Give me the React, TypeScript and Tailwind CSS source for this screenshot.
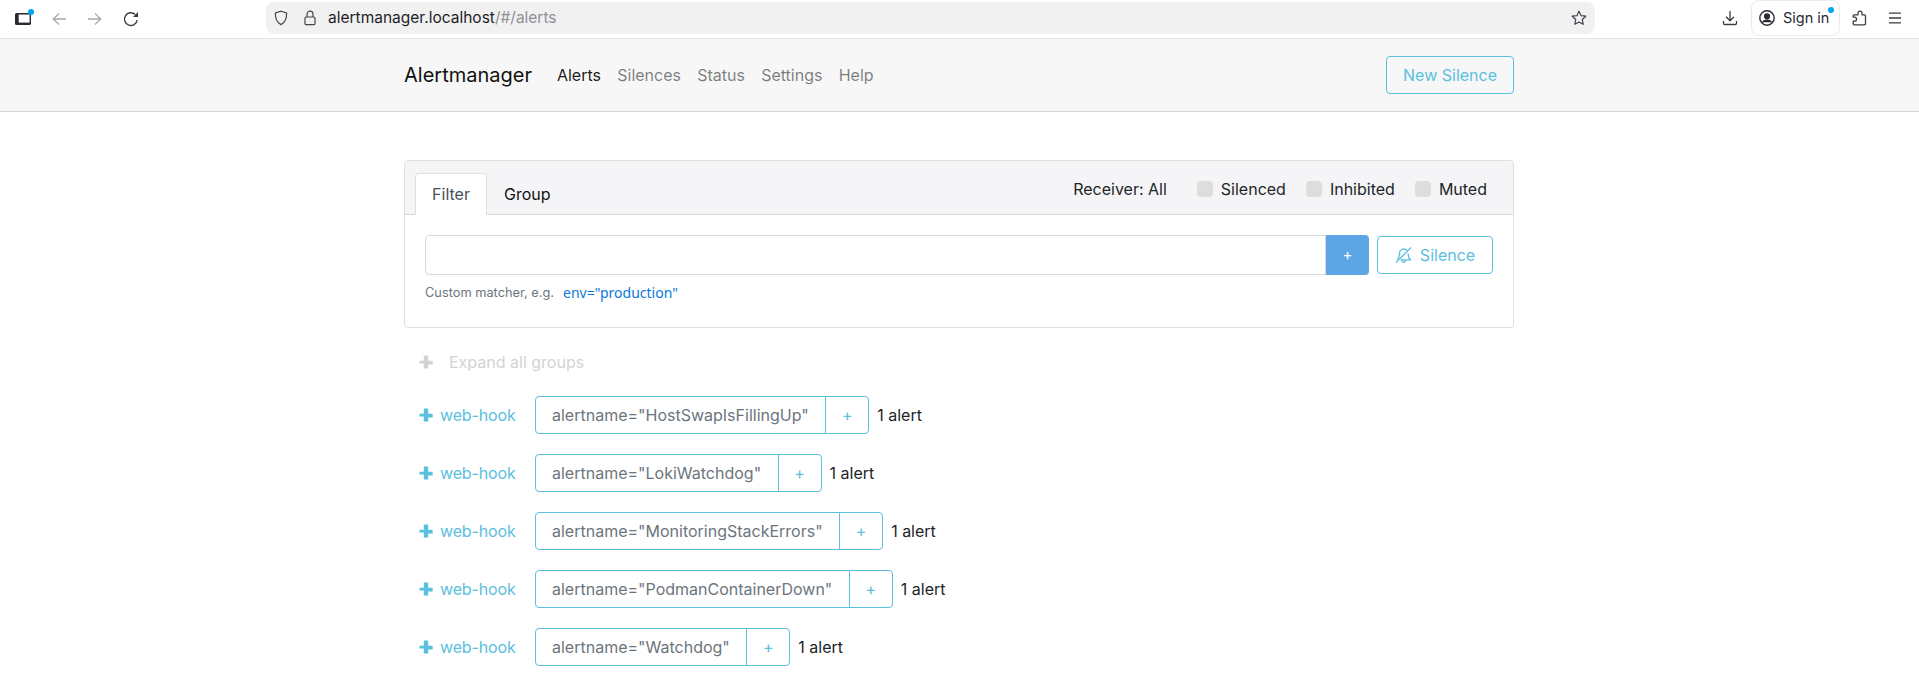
const inter = { fontFamily: "Inter, sans-serif" };

function ThickPlus({ className }: { className: string }) {
  return (
    <svg viewBox="0 0 14 14" className={className} fill="currentColor">
      <path d="M5.4 0.5h3.2c.3 0 .6.3.6.6v4.7h3.9c.3 0 .6.3.6.6v2.6c0 .3-.3.6-.6.6H9.200v3.300c0 .3-.3.6-.6.6H5.400c-.3 0-.6-.3-.6-.6V8.600H1c-.3 0-.6-.3-.6-.6V6.400c0-.3.3-.6.6-.6h3.800V1.100c0-.3.300-.6.600-.6Z" />
    </svg>
  );
}

function Group({ name }: { name: string }) {
  return (
    <div className="flex items-center h-[38px] mb-5">
      <a className="flex items-center text-[#5bc0de] text-base tracking-[-0.15px] w-[131px] shrink-0 pl-[15px]">
        <ThickPlus className="w-[14px] h-[14px] mr-[7px]" />
        web-hook
      </a>
      <div className="flex h-[38px] border border-[#5bc0de] rounded-[4px]">
        <span className="flex items-center pl-[16px] pr-[16.5px] text-base text-[#6c757d] border-r border-[#5bc0de] whitespace-nowrap">
          alertname="{name}"
        </span>
        <span className="flex items-center justify-center w-[42px] text-[#5bc0de] text-base">+</span>
      </div>
      <span className="ml-2 text-base text-[#212529]">1 alert</span>
    </div>
  );
}

function Check({ label, last }: { label: string; last?: boolean }) {
  return (
    <label className={`flex items-center text-base text-[#212529] ${last ? "" : "mr-5"}`}>
      <span className="w-4 h-4 rounded-[4px] bg-[#dddddd] mr-2 shrink-0" />
      {label}
    </label>
  );
}

export default function App() {
  return (
    <div className="w-[1919px] h-[683px] overflow-hidden bg-white" style={inter}>
      {/* Browser toolbar */}
      <div className="h-[39px] bg-white border-b border-[#e4e4e4] flex items-center pl-[15px]">
        <svg width="16" height="14" viewBox="0 0 16 14" className="mr-[20px] overflow-visible -mt-[1px]">
          <rect x="0.7" y="1.7" width="14.6" height="10.6" rx="1" fill="none" stroke="#2b2a33" strokeWidth="1.4" />
          <rect x="0.7" y="1.7" width="3" height="10.6" fill="#2b2a33" />
          <rect x="0.7" y="10.6" width="14.6" height="2" fill="#2b2a33" />
          <circle cx="16" cy="0" r="3" fill="#00a5ef" />
        </svg>
        <svg width="16" height="16" viewBox="0 0 16 16" className="mr-[20px]" fill="none" stroke="#a9a9ae" strokeWidth="1.3">
          <path d="M15 8H2M8 2.5 2.2 8 8 13.5" />
        </svg>
        <svg width="16" height="16" viewBox="0 0 16 16" className="mr-[20px]" fill="none" stroke="#a9a9ae" strokeWidth="1.3">
          <path d="M1 8h13M8 2.500 13.800 8 8 13.500" />
        </svg>
        <svg width="16" height="16" viewBox="0 0 16 16" className="mr-[127px]" fill="none" stroke="#3d3c45" strokeWidth="1.4">
          <path d="M14.200 9a6.400 6.400 0 1 1-2-5.600" />
          <path d="M15 1v5h-5Z" fill="#3d3c45" stroke="none" />
        </svg>
        <div className="flex items-center h-8 w-[1329px] rounded-lg bg-[#f1f1f2] pl-[8px] pr-2 -mt-[3px]">
          <svg width="14" height="16" viewBox="0 0 14 16" fill="none" stroke="#45444d" strokeWidth="1.2" className="mr-[16px]">
            <path d="M7 1.200 12.600 3c.2 5.200-1 9.200-5.600 11.600C2.400 12.200 1.200 8.200 1.400 3Z" />
          </svg>
          <svg width="12" height="16" viewBox="0 0 12 16" fill="none" stroke="#45444d" strokeWidth="1.2" className="mr-[12px]">
            <rect x="1" y="7" width="10" height="7.600" rx="1.200" />
            <path d="M3 7V4.200a3 3 0 0 1 6 0V7" />
          </svg>
          <span className="text-[15.5px] whitespace-nowrap text-[#1f1e26]">
            alertmanager.localhost<span className="text-[#8f8f95]">/#/alerts</span>
          </span>
          <svg width="16" height="16" viewBox="0 0 16 16" fill="none" stroke="#45444d" strokeWidth="1.2" strokeLinejoin="round" className="ml-auto">
            <path d="M8 1.200 10 5.600l4.800.6-3.500 3.300.9 4.800L8 11.900l-4.200 2.400.9-4.800L1.200 6.200 6 5.600Z" />
          </svg>
        </div>
        <svg width="16" height="16" viewBox="0 0 16 16" fill="none" stroke="#3d3c45" strokeWidth="1.3" className="ml-[127px] -mt-[2px]">
          <path d="M8 1v9.500M4 6.800l4 4 4-4M1.500 11v2.200c0 .7.5 1.300 1.300 1.300h10.400c.8 0 1.300-.6 1.300-1.300V11" />
        </svg>
        <div className="flex items-center ml-[13px] w-[89px] h-[36px] border border-[#ebebed] rounded-lg pl-[7px] relative -mt-[3px]">
          <svg width="16" height="16" viewBox="0 0 16 16" className="mr-[8px] shrink-0" fill="none" stroke="#2b2a33" strokeWidth="1.4">
            <circle cx="8" cy="8" r="7.200" />
            <circle cx="8" cy="6.300" r="2.400" fill="#2b2a33" />
            <path d="M3.600 12.300c.6-1.600 2-2.200 4.400-2.200s3.800.6 4.400 2.200" fill="#2b2a33" />
          </svg>
          <span className="text-[14.5px] text-[#2b2a33] whitespace-nowrap pt-[1px]">Sign in</span>
          <span className="absolute top-[6px] right-[5px] w-[6px] h-[6px] rounded-full bg-[#00a5ef]" />
        </div>
        <svg width="16" height="16" viewBox="0 0 16 16" fill="none" stroke="#3d3c45" strokeWidth="1.3" strokeLinejoin="round" className="ml-[11px] -mt-[2px]">
          <path d="M9 1.200c1.200 0 2 .9 2 2v1.600h2.500c.6 0 1 .4 1 1v8c0 .6-.4 1-1 1H3.200c-.6 0-1-.4-1-1v-2.600h1.300a2 2 0 0 0 0-4H2.200V5.800c0-.6.4-1 1-1H7V3.200c0-1.100.8-2 2-2Z" />
        </svg>
        <svg width="16" height="16" viewBox="0 0 16 16" fill="none" stroke="#3d3c45" strokeWidth="1.3" className="ml-[20px] -mt-[2px]">
          <path d="M2 3.200h12M2 8h12M2 12.800h12" />
        </svg>
      </div>

      {/* Navbar */}
      <nav className="h-[73px] bg-[#f7f7f7] border-b border-[#d8d8d8] flex items-center w-full">
        <div className="w-[1140px] ml-[389px] px-[15px] flex items-center">
          <span className="text-[20px] text-[#111] mr-[25px]">Alertmanager</span>
          <div className="flex gap-[16.25px] text-base text-[#00000080]">
            <span className="text-[#000000e6]">Alerts</span>
            <span>Silences</span>
            <span>Status</span>
            <span>Settings</span>
            <span>Help</span>
          </div>
          <button className="ml-auto h-[38px] px-4 border border-[#5bc0de] rounded-[4px] text-[#5bc0de] text-base">
            New Silence
          </button>
        </div>
      </nav>

      {/* Main */}
      <main className="w-[1140px] ml-[389px] px-[15px] pt-[48px]">
        <div className="border border-[#dfdfdf] rounded-[4px] h-[168px]">
          <div className="h-[54px] bg-[#f5f5f7] border-b border-[#d8d8d8] rounded-t-[4px] flex items-end pl-[10px] pr-[26px]">
            <div className="h-[42px] w-[72px] bg-white border border-[#dfdfdf] border-b-white rounded-t-[4px] -mb-px flex items-center justify-center text-base text-[#495057]">
              Filter
            </div>
            <div className="h-[42px] ml-[17px] pt-[2px] flex items-center text-base text-[#111]">Group</div>
            <div className="ml-auto h-[54px] flex items-center -mb-px pt-[1px]">
              <span className="text-base text-[#212529] mr-[30px]">Receiver: All</span>
              <Check label="Silenced" />
              <Check label="Inhibited" />
              <Check label="Muted" last />
            </div>
          </div>
          <div className="pt-[20px] px-[20px]">
            <div className="flex items-center">
              <div className="flex-1 h-10 border border-[#d8d8d8] rounded-l-[4px] bg-white" />
              <div className="w-[43px] h-10 bg-[#5ca6e6] rounded-r-[4px] flex items-center justify-center text-white text-[15px]">+</div>
              <button className="ml-2 w-[116px] h-[38px] border border-[#5bc0de] rounded-[4px] text-[#5bc0de] text-base flex items-center justify-center">
                <svg width="17" height="16" viewBox="0 0 17 16" fill="none" stroke="currentColor" strokeWidth="1.3" className="mr-2">
                  <path d="M1 15.500 16 .5" />
                  <path d="M12 3.500C11.200 2.500 10 2 8.500 2 6 2 4.500 4 4.500 6.500c0 2.500-1 4.700-2.200 6" />
                  <path d="M13 6.500c.2 2.800.9 4.800 2.200 6.300H5.500M7 13c0 1.400.7 2.300 1.700 2.300S10.500 14.400 10.500 13" />
                </svg>
                Silence
              </button>
            </div>
            <div className="mt-[8px] flex items-center h-[20px]">
              <span className="text-[12.8px] text-[#6c757d]">Custom matcher, e.g.</span>
              <span className="ml-[9px] text-[14px] text-[#0b78d8] -mt-[1px]" style={{ fontFamily: '"Noto Sans", sans-serif' }}>
                env="production"
              </span>
            </div>
          </div>
        </div>

        <div className="flex items-center mt-[24px] mb-[24px] h-[20px] pl-[15px] text-[#d3d3d3] text-base">
          <ThickPlus className="w-[14px] h-[14px] mr-[16px]" />
          Expand all groups
        </div>

        <Group name="HostSwapIsFillingUp" />
        <Group name="LokiWatchdog" />
        <Group name="MonitoringStackErrors" />
        <Group name="PodmanContainerDown" />
        <Group name="Watchdog" />
      </main>
    </div>
  );
}
